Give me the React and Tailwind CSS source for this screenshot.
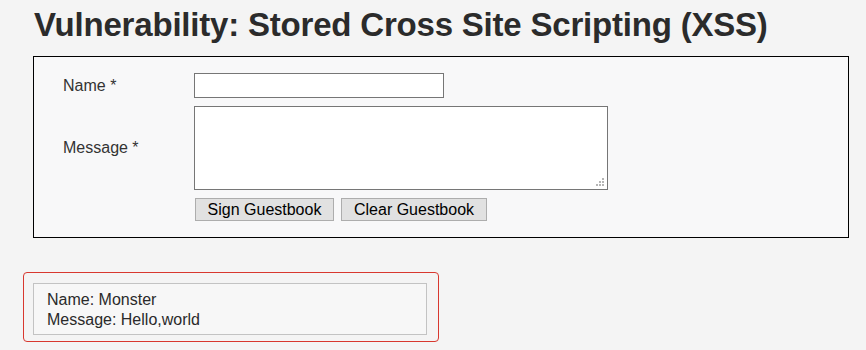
export default function App() {
  const font = { fontFamily: '"Liberation Sans", Arial, sans-serif' };
  return (
    <div className="min-h-[350px] w-full bg-[#f4f4f4] text-[#2a2a2a]" style={font}>
      <div className="pt-[5px] pl-[34px]">
        <h1 className="text-[33px] font-bold leading-[40px] tracking-[-0.2px] text-[#2b2b2b]">
          Vulnerability: Stored Cross Site Scripting (XSS)
        </h1>
      </div>
      <div className="ml-[33px] mt-[11px] w-[816px] border border-black bg-[#f8f8f9] pl-[29px] pt-[16px] pb-[16px]">
        <div className="grid grid-cols-[131px_auto] items-center gap-y-[8px]">
          <div className="text-[16px] leading-[20px] text-[#333]">Name *</div>
          <div className="h-[25px] w-[250px] border border-[#767676] bg-white"></div>
          <div className="text-[16px] leading-[20px] text-[#333]">Message *</div>
          <div className="relative h-[84px] w-[414px] border border-[#767676] bg-white">
            <svg className="absolute right-[2px] bottom-[2px]" width="10" height="10" viewBox="0 0 10 10">
              <rect x="7" y="1" width="2" height="2" fill="#b5b5b5" />
              <rect x="4" y="4" width="2" height="2" fill="#b5b5b5" />
              <rect x="7" y="4" width="2" height="2" fill="#b5b5b5" />
              <rect x="1" y="7" width="2" height="2" fill="#b5b5b5" />
              <rect x="4" y="7" width="2" height="2" fill="#b5b5b5" />
              <rect x="7" y="7" width="2" height="2" fill="#b5b5b5" />
            </svg>
          </div>
          <div></div>
          <div className="flex gap-[7px] pl-[1px]">
            <div className="flex h-[23px] w-[139px] items-center justify-center border border-[#adadad] bg-[#e1e1e1] text-[16px] text-black">
              Sign Guestbook
            </div>
            <div className="flex h-[23px] w-[146px] items-center justify-center border border-[#adadad] bg-[#e1e1e1] text-[16px] text-black">
              Clear Guestbook
            </div>
          </div>
        </div>
      </div>
      <div className="ml-[23px] mt-[34px] w-[416px] rounded-[4px] border border-[#d8382f] pt-[10px] pb-[6px] pl-[9px]">
        <div className="w-[394px] border border-[#c3c3c3] bg-[#f7f7f7] pl-[13px] pt-[6px] pb-[4px] text-[16px] leading-[20px] text-[#2a2a2a]">
          <div>Name: Monster</div>
          <div>Message: Hello,world</div>
        </div>
      </div>
    </div>
  );
}
